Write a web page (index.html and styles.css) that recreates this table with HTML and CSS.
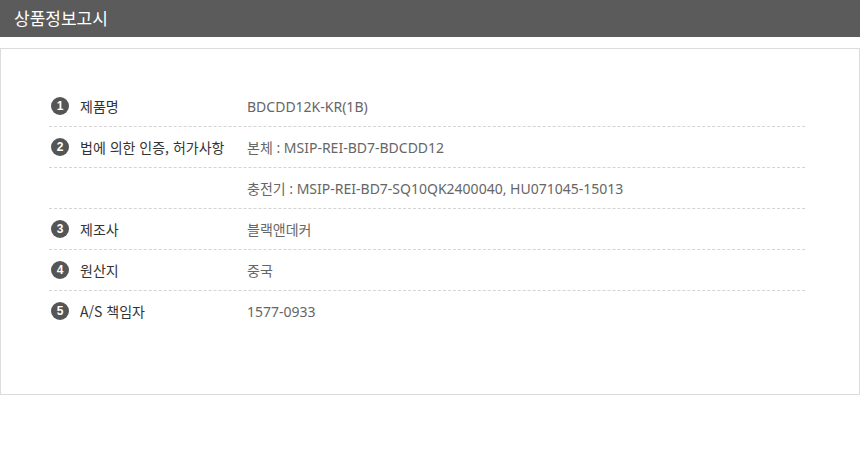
FILE: index.html
```html
<!DOCTYPE html>
<html lang="ko">
<head>
  <meta charset="UTF-8">
  <title>상품정보고시</title>
  <link rel="stylesheet" href="styles.css">
</head>
<body>

  <h2 class="title-bar">상품정보고시</h2>

  <div class="notice-box">
    <ul class="notice-list">
      <li class="notice-row">
        <span class="label"><span class="num">1</span>제품명</span>
        <span class="value">BDCDD12K-KR(1B)</span>
      </li>
      <li class="notice-row">
        <span class="label"><span class="num">2</span>법에 의한 인증, 허가사항</span>
        <span class="value">본체 : MSIP-REI-BD7-BDCDD12</span>
      </li>
      <li class="notice-row">
        <span class="label"></span>
        <span class="value">충전기 : MSIP-REI-BD7-SQ10QK2400040, HU071045-15013</span>
      </li>
      <li class="notice-row">
        <span class="label"><span class="num">3</span>제조사</span>
        <span class="value">블랙앤데커</span>
      </li>
      <li class="notice-row">
        <span class="label"><span class="num">4</span>원산지</span>
        <span class="value">중국</span>
      </li>
      <li class="notice-row">
        <span class="label"><span class="num">5</span>A/S 책임자</span>
        <span class="value">1577-0933</span>
      </li>
    </ul>
  </div>

</body>
</html>
```

FILE: styles.css
```css
body {
  margin: 0;
  font-family: "Noto Sans", "Noto Sans CJK KR", sans-serif;
  background: #fff;
}

.title-bar {
  margin: 0;
  height: 37px;
  line-height: 36px;
  padding-left: 14px;
  background-color: #5b5b5b;
  color: #fff;
  font-family: "Noto Sans CJK KR", sans-serif;
  font-size: 17px;
  font-weight: normal;
}

.notice-box {
  margin-top: 11px;
  border: 1px solid #dcdcdc;
  padding: 37px 54px 63px 48px;
}

.notice-list {
  list-style: none;
  margin: 0;
  padding: 0;
}

.notice-row {
  display: flex;
  align-items: center;
  height: 40px;
  border-bottom: 1px dashed #d4d4d4;
  font-size: 14px;
}

.notice-row:last-child {
  border-bottom: none;
}

.label {
  display: flex;
  align-items: center;
  width: 198px;
  color: #333;
  font-family: "Noto Sans CJK KR", sans-serif;
}

.num {
  display: inline-flex;
  align-items: center;
  justify-content: center;
  width: 18px;
  height: 18px;
  margin: 0 11px 0 2px;
  border-radius: 50%;
  background-color: #555;
  color: #fff;
  font-family: "Liberation Sans", Arial, sans-serif;
  font-size: 12px;
  font-weight: bold;
}

.value {
  color: #666;
}
```
